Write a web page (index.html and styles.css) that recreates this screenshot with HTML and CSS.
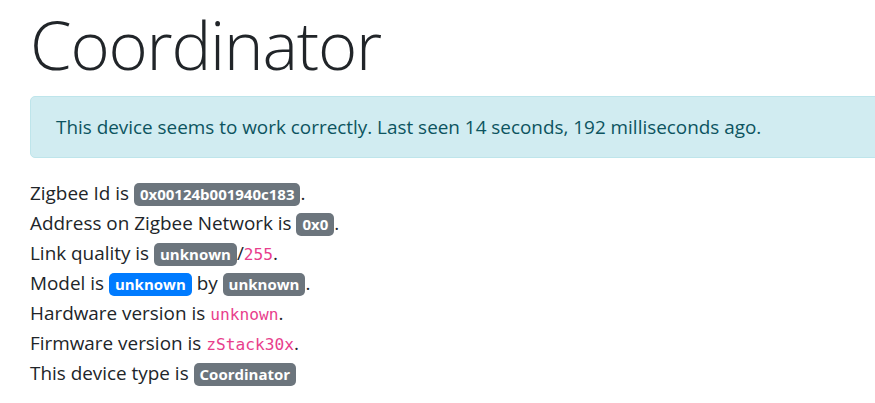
FILE: index.html
```html
<!DOCTYPE html>
<html lang="en">
<head>
<meta charset="utf-8">
<title>Coordinator</title>
<link rel="stylesheet" href="styles.css">
</head>
<body>
<main class="page">
  <h1 class="title">Coordinator</h1>
  <div class="alert">This device seems to work correctly. Last seen 14 seconds, 192 milliseconds ago.</div>
  <div class="facts">
    <div class="fact">Zigbee Id is <span class="badge">0x00124b001940c183</span>.</div>
    <div class="fact">Address on Zigbee Network is <span class="badge">0x0</span>.</div>
    <div class="fact">Link quality is <span class="badge">unknown</span>/<code class="code">255</code>.</div>
    <div class="fact">Model is <span class="badge badge-primary">unknown</span> by <span class="badge">unknown</span>.</div>
    <div class="fact">Hardware version is <code class="code">unknown</code>.</div>
    <div class="fact">Firmware version is <code class="code">zStack30x</code>.</div>
    <div class="fact">This device type is <span class="badge">Coordinator</span></div>
  </div>
</main>
</body>
</html>
```

FILE: styles.css
```css
html {
  overflow: hidden;
}
body {
  margin: 0;
  background: #fff;
  color: #212529;
  font-family: "Open Sans", "Noto Sans", sans-serif;
  font-size: 18.9px;
  line-height: 30px;
}
.page {
  padding: 2px 0 0 30px;
}
.title {
  margin: 0 0 10px;
  font-size: 67px;
  font-weight: 300;
  letter-spacing: -1.2px;
  line-height: 84px;
  color: #212529;
}
.alert {
  background: #d1ecf1;
  border: 1px solid #bee5eb;
  color: #0c5460;
  border-radius: 5px;
  padding: 15px 25px;
  margin: 0 -20px 20px 0;
}
.fact {
  height: 30px;
}
.badge {
  display: inline-block;
  background: #6c757d;
  color: #fff;
  font-size: 15px;
  font-weight: 700;
  line-height: 1;
  padding: 3.75px 6px;
  border-radius: 5px;
  vertical-align: baseline;
}
.badge-primary {
  background: #007bff;
}
.code {
  font-family: "DejaVu Sans Mono", "Liberation Mono", monospace;
  font-size: 16.2px;
  line-height: 1;
  color: #e83e8c;
}
```
